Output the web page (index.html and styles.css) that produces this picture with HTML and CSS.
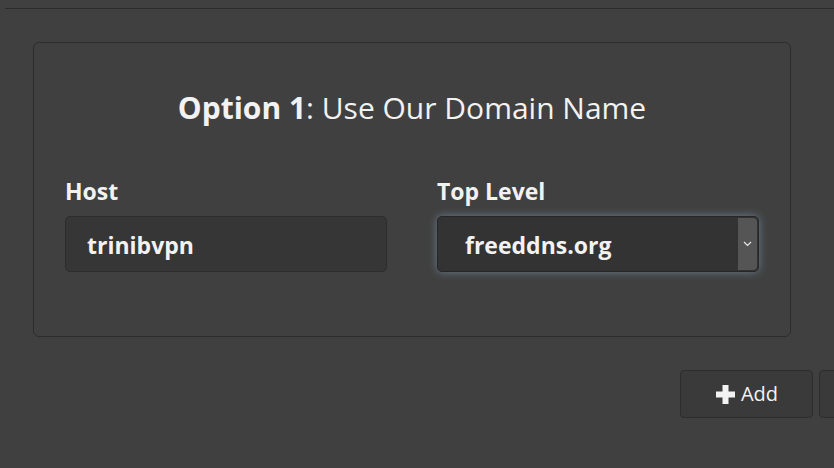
FILE: index.html
```html
<!DOCTYPE html>
<html lang="en">
<head>
<meta charset="utf-8">
<title>Domain</title>
<link rel="stylesheet" href="styles.css">
</head>
<body>
<div class="page">
  <div class="rule"></div>
  <section class="card">
    <h2 class="title"><strong>Option 1</strong>: Use Our Domain Name</h2>
    <div class="fields">
      <div class="field">
        <label class="label">Host</label>
        <div class="input">trinibvpn</div>
      </div>
      <div class="field">
        <label class="label">Top Level</label>
        <div class="select">
          <span class="select-value">freeddns.org</span>
          <span class="select-arrow">
            <svg width="9" height="6" viewBox="0 0 9 6"><path d="M1 1 L4.5 4.5 L8 1" fill="none" stroke="#e8e8e8" stroke-width="1.2"/></svg>
          </span>
        </div>
      </div>
    </div>
  </section>
  <div class="actions">
    <button class="btn">
      <svg class="plus" width="19" height="19" viewBox="0 0 19 19"><path d="M6.5 0h6v6.5h6.5v6h-6.5v6.5h-6v-6.5h-6.5v-6h6.5z" fill="#f2f2f2"/></svg>
      <span>Add</span>
    </button>
    <button class="btn btn-next"></button>
  </div>
</div>
</body>
</html>
```

FILE: styles.css
```css
html, body {
  margin: 0;
  padding: 0;
  background: #404040;
}
body {
  font-family: "Open Sans", "Noto Sans", sans-serif;
  color: #f2f2f2;
}
.page {
  width: 834px;
  height: 468px;
  padding-top: 8px;
  box-sizing: border-box;
  overflow: hidden;
}
.rule {
  margin-left: 5px;
  height: 1px;
  background: #2b2b2b;
}
.card {
  margin: 33px 0 0 33px;
  width: 694px;
  height: 249px;
  border: 1px solid #2d2d2d;
  border-radius: 6px;
  padding: 44px 31px 0 31px;
}
.title {
  margin: 0;
  font-size: 30px;
  line-height: 42px;
  font-weight: 400;
  text-align: center;
}
.title strong {
  font-weight: 700;
}
.fields {
  margin-top: 46px;
  display: grid;
  grid-template-columns: 322px 322px;
  column-gap: 50px;
}
.field {
  display: flex;
  flex-direction: column;
}
.label {
  font-size: 23px;
  font-weight: 700;
  line-height: 32px;
  margin-bottom: 9px;
}
.input, .select {
  height: 56px;
  box-sizing: border-box;
  border: 1px solid #2c2c2c;
  border-radius: 5px;
  background: #363636;
  font-size: 23px;
  font-weight: 700;
  display: flex;
  align-items: center;
  padding-top: 1px;
}
.input {
  padding-left: 21px;
}
.select {
  background: #333333;
  border-color: #262626;
  box-shadow: 0 0 9px rgba(140, 175, 205, 0.55);
  padding-left: 27px;
  padding-top: 0;
  overflow: hidden;
}
.select-value {
  flex: 1;
  padding-top: 1px;
}
.select-arrow {
  width: 19px;
  align-self: stretch;
  margin: 1px 1px 1px 0;
  background: #555555;
  border-radius: 0 4px 4px 0;
  display: flex;
  align-items: center;
  justify-content: center;
}
.actions {
  margin-top: 33px;
  padding-left: 680px;
  display: flex;
  gap: 6px;
}
.btn {
  flex: none;
  width: 133px;
  height: 48px;
  box-sizing: border-box;
  border: 1px solid #2d2d2d;
  border-radius: 4px;
  background: #3a3a3a;
  color: #f2f2f2;
  font-family: "Open Sans", "Noto Sans", sans-serif;
  font-size: 20px;
  display: flex;
  align-items: center;
  justify-content: center;
  gap: 6px;
  padding: 0 0 0 1px;
}
.btn span {
  line-height: 1;
}
.btn-next {
  width: 40px;
}
```
